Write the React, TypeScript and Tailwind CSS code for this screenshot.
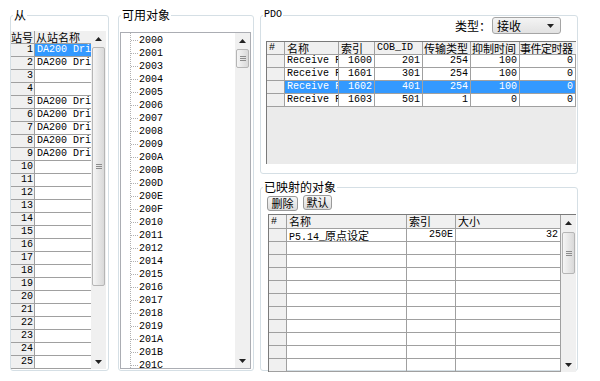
import type { ReactNode } from "react";

// Shared font stacks — SimSun-like grid data is approximated with a 10px mono.
const MONO = "font-['Liberation_Mono','DejaVu_Sans_Mono',monospace] text-[10px]";
const CJK = "font-['Noto_Sans_CJK_SC','Noto_Sans',sans-serif] text-[12px]";
const CJK_SM = "font-['Noto_Sans_CJK_SC','Noto_Sans',sans-serif] text-[11px]";

const SLAVES: Record<number, string> = {
  1: "DA200 Dri",
  2: "DA200 Dri",
  5: "DA200 Dri",
  6: "DA200 Dri",
  7: "DA200 Dri",
  8: "DA200 Dri",
  9: "DA200 Dri",
};

const OBJECTS = [
  "2000", "2001", "2003", "2004", "2005", "2006", "2007", "2008", "2009",
  "200A", "200B", "200D", "200E", "200F", "2010", "2011", "2012", "2014",
  "2015", "2016", "2017", "2018", "2019", "201A", "201B", "201C",
];

const PDOS = [
  { name: "Receive F", index: "1600", cob: "201", type: "254", inhibit: "100", timer: "0" },
  { name: "Receive F", index: "1601", cob: "301", type: "254", inhibit: "100", timer: "0" },
  { name: "Receive F", index: "1602", cob: "401", type: "254", inhibit: "100", timer: "0", selected: true },
  { name: "Receive F", index: "1603", cob: "501", type: "1", inhibit: "0", timer: "0" },
];

function Arrow({ down }: { down?: boolean }) {
  return (
    <svg width="7" height="4" viewBox="0 0 7 4" className="block">
      <polygon points={down ? "0,0 7,0 3.5,4" : "0,4 7,4 3.5,0"} fill="#222" />
    </svg>
  );
}

function Scrollbar({ thumb }: { thumb: string }) {
  return (
    <div className="flex w-[15px] shrink-0 flex-col bg-[#f0f0f0]">
      <div className="flex h-[15px] shrink-0 items-center justify-center">
        <Arrow />
      </div>
      <div
        className={
          "mx-[1px] flex shrink-0 items-center justify-center rounded-[2px] border border-[#b5b5b5] bg-gradient-to-r from-[#f5f5f5] to-[#d9d9d9] " +
          thumb
        }
      >
        <div className="flex flex-col gap-[1px]">
          <div className="h-[1px] w-[6px] bg-[#8c8c8c]" />
          <div className="h-[1px] w-[6px] bg-[#8c8c8c]" />
          <div className="h-[1px] w-[6px] bg-[#8c8c8c]" />
        </div>
      </div>
      <div className="flex-1" />
      <div className="flex h-[15px] shrink-0 items-center justify-center">
        <Arrow down />
      </div>
    </div>
  );
}

function GroupBox({
  title,
  titleClass = CJK,
  className,
  children,
}: {
  title: string;
  titleClass?: string;
  className: string;
  children: ReactNode;
}) {
  return (
    <div className={"relative shrink-0 rounded-[3px] border border-[#d5dfe5] " + className}>
      <span className={"absolute -top-[8px] left-[2px] bg-white px-[1px] leading-[14px] text-black " + titleClass}>
        {title}
      </span>
      {children}
    </div>
  );
}

function Button({ children, className }: { children: ReactNode; className?: string }) {
  return (
    <div
      className={
        "flex h-[15px] items-center justify-center rounded-[3px] border border-[#9a9a9a] bg-gradient-to-b from-[#f6f6f6] to-[#dcdcdc] leading-[13px] text-black " +
        CJK_SM +
        " " +
        (className ?? "")
      }
    >
      {children}
    </div>
  );
}

export default function App() {
  return (
    <div className="flex h-[381px] w-[600px] items-start overflow-hidden bg-white pl-[10px] pt-[15px]">
      {/* 从 — slave list */}
      <GroupBox title="从" className="h-[356px] w-[99px]">
        <div className="mt-[15px] flex h-[338px] w-[95px]">
          <div className="flex w-[80px] flex-col">
            <div className="flex h-[13px] shrink-0 items-center bg-[#f0f0f0] text-black">
              <div className={"h-full w-[24px] border-r border-b border-[#a0a0a0] leading-[12px] " + CJK_SM}>站号</div>
              <div className={"h-full flex-1 border-b border-[#a0a0a0] pl-[1px] leading-[12px] " + CJK_SM}>从站名称</div>
            </div>
            {Array.from({ length: 25 }, (_, i) => i + 1).map((n) => {
              const sel = n === 1;
              return (
                <div key={n} className="flex h-[13px] shrink-0 leading-[12px]">
                  <div
                    className={
                      "w-[24px] border-r border-b border-[#a0a0a0] bg-[#f0f0f0] pr-[1px] text-right text-black " + MONO
                    }
                  >
                    {n}
                  </div>
                  <div
                    className={
                      "w-[56px] overflow-hidden whitespace-nowrap border-b border-[#a0a0a0] pl-[2px] " +
                      MONO +
                      (sel ? " bg-[#3399ff] text-white" : " text-black")
                    }
                  >
                    {SLAVES[n] ?? ""}
                  </div>
                </div>
              );
            })}
          </div>
          <Scrollbar thumb="mt-[1px] h-[239px]" />
        </div>
      </GroupBox>

      {/* 可用对象 — object tree */}
      <GroupBox title="可用对象" className="ml-[9px] h-[356px] w-[136px]">
        <div className="ml-[1px] mt-[16px] flex h-[337px] w-[131px] border border-[#abadb3]">
          <div className="flex-1 pl-[9px]">
            <div className="h-full border-l border-dotted border-[#b0b0b0] pt-[1px]">
              {OBJECTS.map((id) => (
                <div key={id} className="flex h-[13px] items-center">
                  <span className="h-0 w-[7px] border-t border-dotted border-[#b0b0b0]" />
                  <span className={"pl-[1px] leading-[11px] text-black " + MONO}>{id}</span>
                </div>
              ))}
            </div>
          </div>
          <Scrollbar thumb="mt-[1px] h-[19px]" />
        </div>
      </GroupBox>

      <div className="ml-[6px] flex w-[318px] shrink-0 flex-col">
        {/* PDO table */}
        <GroupBox title="PDO" titleClass={MONO} className="h-[159px] w-[318px]">
          <div className="flex items-center justify-end pr-[16px] pt-[1px]">
            <span className={"leading-[14px] text-black " + CJK}>类型：</span>
            <div className="ml-[1px] flex h-[17px] w-[69px] items-center justify-between rounded-[3px] border border-[#a5a5a5] bg-gradient-to-b from-[#f4f4f4] to-[#e2e2e2] pl-[4px] pr-[6px]">
              <span className={"leading-[14px] text-black " + CJK}>接收</span>
              <Arrow down />
            </div>
          </div>
          <div className="ml-[5px] mt-[7px] flex h-[123px] w-[310px] flex-col border-t border-l border-[#7a7a7a] bg-[#ebebeb]">
            <div className="flex h-[13px] shrink-0 bg-[#f0f0f0] leading-[12px] text-black">
              <div className={"w-[18px] border-r border-b border-[#a0a0a0] pl-[2px] " + MONO}>#</div>
              <div className={"w-[54px] border-r border-b border-[#a0a0a0] pl-[2px] " + CJK_SM}>名称</div>
              <div className={"w-[36px] border-r border-b border-[#a0a0a0] pl-[2px] " + CJK_SM}>索引</div>
              <div className={"w-[48px] border-r border-b border-[#a0a0a0] pl-[2px] " + MONO}>COB_ID</div>
              <div className={"w-[48px] border-r border-b border-[#a0a0a0] pl-[1px] " + CJK_SM}>传输类型</div>
              <div className={"w-[49px] border-r border-b border-[#a0a0a0] pl-[1px] " + CJK_SM}>抑制时间</div>
              <div className={"w-[56px] whitespace-nowrap border-b border-[#a0a0a0] tracking-[-0.5px] " + CJK_SM}>
                事件定时器
              </div>
            </div>
            {PDOS.map((p) => {
              const cell =
                "border-r border-b border-[#a0a0a0] " +
                MONO +
                (p.selected ? " bg-[#3399ff] text-white" : " bg-white text-black");
              return (
                <div key={p.index} className="flex h-[13px] shrink-0 leading-[12px]">
                  <div className="w-[18px] border-r border-b border-[#a0a0a0] bg-[#f0f0f0]" />
                  <div className={"w-[54px] overflow-hidden whitespace-nowrap pl-[2px] " + cell}>{p.name}</div>
                  <div className={"w-[36px] pr-[2px] text-right " + cell}>{p.index}</div>
                  <div className={"w-[48px] pr-[2px] text-right " + cell}>{p.cob}</div>
                  <div className={"w-[48px] pr-[2px] text-right " + cell}>{p.type}</div>
                  <div className={"w-[49px] pr-[2px] text-right " + cell}>{p.inhibit}</div>
                  <div className={"w-[56px] pr-[2px] text-right " + cell}>{p.timer}</div>
                </div>
              );
            })}
          </div>
        </GroupBox>

        {/* 已映射的对象 — mapped objects */}
        <GroupBox title="已映射的对象" className="mt-[13px] h-[184px] w-[318px]">
          <div className="flex items-start gap-[5px] pl-[6px] pt-[7px]">
            <Button className="mt-[1px] w-[31px]">删除</Button>
            <Button className="w-[29px]">默认</Button>
          </div>
          <div className="ml-[7px] mt-[3px] flex h-[158px] w-[308px] border-t border-l border-[#7a7a7a]">
            <div className="flex flex-1 flex-col">
              <div className="flex h-[14px] shrink-0 bg-[#f0f0f0] leading-[13px] text-black">
                <div className={"w-[18px] border-r border-b border-[#a0a0a0] pl-[2px] " + MONO}>#</div>
                <div className={"w-[120px] border-r border-b border-[#a0a0a0] pl-[2px] " + CJK_SM}>名称</div>
                <div className={"w-[49px] border-r border-b border-[#a0a0a0] pl-[2px] " + CJK_SM}>索引</div>
                <div className={"flex-1 border-r border-b border-[#a0a0a0] pl-[2px] " + CJK_SM}>大小</div>
              </div>
              {Array.from({ length: 11 }, (_, i) => i).map((i) => (
                <div key={i} className="flex h-[13px] shrink-0 leading-[12px] text-black">
                  <div className="w-[18px] border-r border-b border-[#a0a0a0] bg-[#f0f0f0]" />
                  <div className={"w-[120px] border-r border-b border-[#a0a0a0] pl-[2px] " + MONO}>
                    {i === 0 ? (
                      <>
                        P5.14_<span className={CJK_SM}>原点设定</span>
                      </>
                    ) : null}
                  </div>
                  <div className={"w-[49px] border-r border-b border-[#a0a0a0] pr-[2px] text-right " + MONO}>
                    {i === 0 ? "250E" : ""}
                  </div>
                  <div className={"flex-1 border-r border-b border-[#a0a0a0] pr-[2px] text-right " + MONO}>
                    {i === 0 ? "32" : ""}
                  </div>
                </div>
              ))}
            </div>
            <Scrollbar thumb="mt-[2px] h-[42px]" />
          </div>
        </GroupBox>
      </div>
    </div>
  );
}
